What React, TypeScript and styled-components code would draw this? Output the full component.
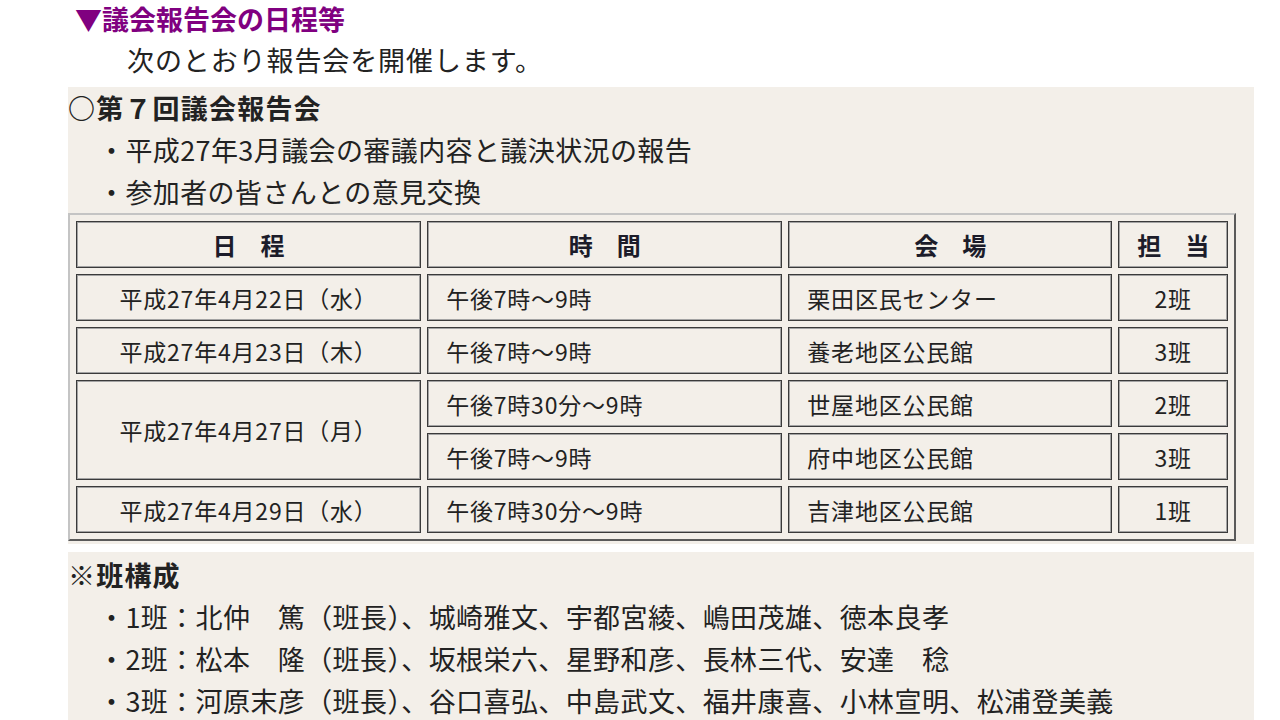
import React from "react";
import styled, { createGlobalStyle } from "styled-components";

const Global = createGlobalStyle`
  html, body { margin: 0; padding: 0; background: #ffffff; }
  body {
    font-family: "Noto Sans CJK JP", "Noto Sans", sans-serif;
    color: #222222;
  }
`;

const Page = styled.div`
  width: 1280px;
  height: 720px;
  overflow: hidden;
  padding-left: 68px;
  box-sizing: border-box;
`;

const Heading = styled.h2`
  margin: 0;
  padding-left: 7px;
  font-size: 27px;
  line-height: 38px;
  font-weight: 700;
  color: #800080;
`;

const Lead = styled.p`
  margin: 0 0 5px 0;
  padding-left: 59px;
  font-size: 27px;
  line-height: 44px;
  letter-spacing: 0.9px;
  color: #222;
`;

const Panel = styled.section<{ $gap?: number }>`
  width: 1186px;
  background: #f3efe9;
  margin-bottom: ${(p) => p.$gap ?? 0}px;
  padding-bottom: ${(p) => (p.$gap ? 3 : 0)}px;
`;

const Title = styled.div<{ $top?: number }>`
  font-size: 27px;
  line-height: 42px;
  font-weight: 700;
  letter-spacing: 1.2px;
  color: #222;
  padding-top: ${(p) => p.$top ?? 0}px;
`;

const Item = styled.div`
  padding-left: 30px;
  font-size: 27px;
  line-height: 42px;
  letter-spacing: 0.4px;
  color: #222;
  white-space: nowrap;
`;

const Table = styled.table`
  width: 1168px;
  border-collapse: separate;
  border-spacing: 6px 6px;
  border-style: solid;
  border-width: 2px;
  border-color: #c4c4c4 #5a5a5a #5a5a5a #c4c4c4;
  table-layout: fixed;
`;

const Th = styled.th<{ $w: number }>`
  width: ${(p) => p.$w - 4}px;
  height: 45px;
  padding: 0;
  border: 1px solid #3a3a3a;
  box-shadow: inset 0 0 0 1px #a3a3a3;
  font-size: 24px;
  font-weight: 700;
  color: #1c1c2a;
  text-align: center;
  vertical-align: middle;
`;

const Td = styled.td<{ $center?: boolean }>`
  height: 45px;
  padding: 0 0 0 ${(p) => (p.$center ? 0 : 18)}px;
  border: 1px solid #3a3a3a;
  box-shadow: inset 0 0 0 1px #a3a3a3;
  font-size: 23px;
  letter-spacing: 0.8px;
  color: #222;
  text-align: ${(p) => (p.$center ? "center" : "left")};
  vertical-align: middle;
  white-space: nowrap;
`;

type Slot = { time: string; place: string; team: string };
type Day = { date: string; slots: Slot[] };

const days: Day[] = [
  { date: "平成27年4月22日（水）", slots: [{ time: "午後7時～9時", place: "栗田区民センター", team: "2班" }] },
  { date: "平成27年4月23日（木）", slots: [{ time: "午後7時～9時", place: "養老地区公民館", team: "3班" }] },
  {
    date: "平成27年4月27日（月）",
    slots: [
      { time: "午後7時30分～9時", place: "世屋地区公民館", team: "2班" },
      { time: "午後7時～9時", place: "府中地区公民館", team: "3班" },
    ],
  },
  { date: "平成27年4月29日（水）", slots: [{ time: "午後7時30分～9時", place: "吉津地区公民館", team: "1班" }] },
];

const teams = [
  "・1班：北仲　篤（班長）、城崎雅文、宇都宮綾、嶋田茂雄、徳本良孝",
  "・2班：松本　隆（班長）、坂根栄六、星野和彦、長林三代、安達　稔",
  "・3班：河原末彦（班長）、谷口喜弘、中島武文、福井康喜、小林宣明、松浦登美義",
];

export default function App() {
  return (
    <Page>
      <Global />
      <Heading>▼議会報告会の日程等</Heading>
      <Lead>次のとおり報告会を開催します。</Lead>
      <Panel $gap={8}>
        <Title>○第７回議会報告会</Title>
        <Item>・平成27年3月議会の審議内容と議決状況の報告</Item>
        <Item>・参加者の皆さんとの意見交換</Item>
        <Table>
          <thead>
            <tr>
              <Th $w={345}>日　程</Th>
              <Th $w={355}>時　間</Th>
              <Th $w={324}>会　場</Th>
              <Th $w={111}>担　当</Th>
            </tr>
          </thead>
          <tbody>
            {days.map((d) =>
              d.slots.map((s, i) => (
                <tr key={d.date + i}>
                  {i === 0 && (
                    <Td $center rowSpan={d.slots.length}>
                      {d.date}
                    </Td>
                  )}
                  <Td>{s.time}</Td>
                  <Td>{s.place}</Td>
                  <Td $center>{s.team}</Td>
                </tr>
              ))
            )}
          </tbody>
        </Table>
      </Panel>
      <Panel>
        <Title $top={2}>※班構成</Title>
        {teams.map((t) => (
          <Item key={t}>{t}</Item>
        ))}
      </Panel>
    </Page>
  );
}
